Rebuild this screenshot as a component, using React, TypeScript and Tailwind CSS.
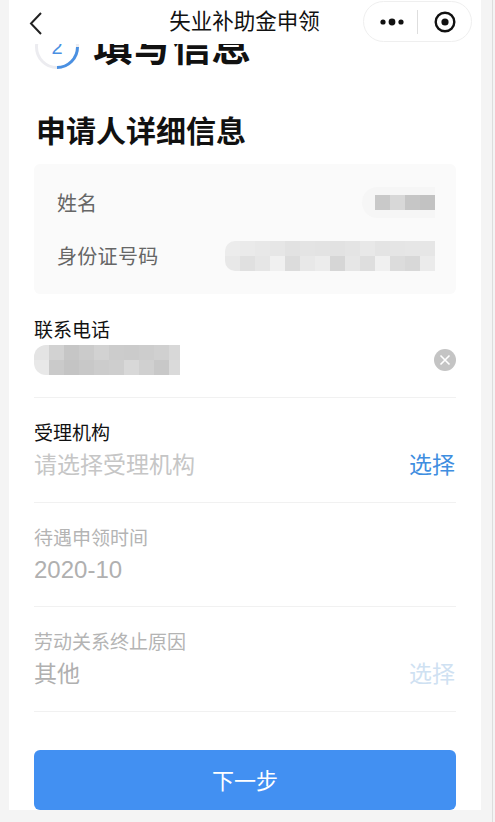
import React from "react";

const cjk = "font-['Liberation_Sans','Noto_Sans_CJK_SC',sans-serif]";

// 打码色块，每格 15px
function Mosaic({ rows, className }: { rows: string[][]; className?: string }) {
  return (
    <div className={`flex flex-col overflow-hidden ${className ?? ""}`}>
      {rows.map((row, i) => (
        <div key={i} className="flex shrink-0">
          {row.map((c, j) => (
            <div key={j} className="w-[15px] h-[15px] shrink-0" style={{ backgroundColor: c }} />
          ))}
        </div>
      ))}
    </div>
  );
}

const nameBlocks = [["#c9c9c9", "#d8d8d8", "#c6c6c6", "#c2c2c2"]];
const idBlocks = [
  ["#ececec", "#eaeaea", "#e8e8e8", "#e6e6e6", "#e2e2e2", "#e4e4e4", "#e3e3e3", "#e2e2e2", "#e4e4e4", "#e8e8e8", "#e4e4e4", "#e5e5e5", "#e6e6e6", "#e6e6e6"],
  ["#e8e8e8", "#e0e0e0", "#e6e6e6", "#f0f0f0", "#dcdcdc", "#e8e8e8", "#ececec", "#d6d6d6", "#e6e6e6", "#dedede", "#f0f0f0", "#dcdcdc", "#d8d8d8", "#ebebeb"],
];
const phoneBlocks = [
  ["#e4e4e4", "#d2d2d2", "#c6c6c6", "#cbcbcb", "#d2d2d2", "#cccccc", "#cbcbcb", "#cdcdcd", "#d0d0d0", "#d8d8d8"],
  ["#e8e8e8", "#cacaca", "#c4c4c4", "#c8c8c8", "#cccccc", "#cecece", "#d8d8d8", "#d0d0d0", "#c8c8c8", "#dadada"],
];

function Field({
  label,
  value,
  dim,
  action,
  actionClass,
}: {
  label: string;
  value: React.ReactNode;
  dim?: boolean;
  action?: string;
  actionClass?: string;
}) {
  return (
    <div className="h-[104.5px] border-b border-[#f1f1f1] pt-[22px]">
      <div className={`text-[19px] leading-[28px] ${dim ? "text-[#b4b4b4]" : "text-[#111]"}`}>{label}</div>
      <div className="flex items-center justify-between h-[34px]">
        <span className={`text-[23px] ${dim ? "text-[#b0b0b0]" : "text-[#c6c6c6]"}`}>{value}</span>
        {action && <span className={`text-[23px] -ml-px mr-px ${actionClass}`}>{action}</span>}
      </div>
    </div>
  );
}

export default function App() {
  return (
    <div className={`relative w-[495px] h-[822px] bg-[#f4f4f4] overflow-hidden ${cjk}`}>
      <div className="absolute left-[492px] top-0 bottom-0 w-px bg-[#dddddd]" />
      <div className="ml-[9px] w-[472px] h-[810px] bg-white flex flex-col">
        {/* 小程序顶栏 */}
        <div className="h-[44px] shrink-0 flex items-center relative">
          <svg width="16" height="24" viewBox="0 0 16 24" className="ml-[19px] mt-[2px]" fill="none" stroke="#222" strokeWidth="2">
            <path d="M13 2 L3 12.5 L13 23" />
          </svg>
          <div className="absolute left-[80px] right-[80px] text-center text-[21.5px] leading-[42px] text-[#111] -ml-[1px]">失业补助金申领</div>
          <div className="absolute left-[354px] top-[1px] w-[109px] h-[41px] rounded-full border border-[#efefef] bg-white flex items-center">
            <svg width="30" height="8" viewBox="0 0 30 8" className="ml-[15px]" fill="#111">
              <circle cx="4" cy="4" r="2.6" />
              <circle cx="13" cy="4" r="3.4" />
              <circle cx="22" cy="4" r="2.6" />
            </svg>
            <div className="w-px h-[24px] bg-[#dedede] ml-[8px]" />
            <svg width="22" height="22" viewBox="0 0 22 22" className="ml-[16px]">
              <circle cx="11" cy="11" r="9.3" fill="none" stroke="#111" strokeWidth="2.4" />
              <circle cx="11" cy="11" r="3.6" fill="#111" />
            </svg>
          </div>
        </div>

        {/* 步骤标题，被顶栏遮住上半部分 */}
        <div className="h-[28px] shrink-0 overflow-hidden">
          <div className="flex items-center -mt-[20px] ml-[25px]">
            <svg width="46" height="46" viewBox="0 0 46 46" fill="none" strokeWidth="3">
              <circle cx="23" cy="23" r="20.5" stroke="#ececf0" />
              <path d="M43.5 23 A20.5 20.5 0 0 1 23 43.5" stroke="#4a90e2" />
              <text x="23" y="30" textAnchor="middle" fontSize="20" fill="#4a90e2" stroke="none">2</text>
            </svg>
            <span className="ml-[13px] text-[39.5px] leading-[46px] font-bold text-[#111]">填写信息</span>
          </div>
        </div>

        <div className="px-[25px] flex flex-col">
          <h1 className="mt-[40px] ml-[2px] text-[30px] leading-[40px] font-bold text-[#111]">申请人详细信息</h1>

          {/* 已带出的信息 */}
          <div className="mt-[12px] h-[130px] rounded-[6px] bg-[#fafafa] pl-[23px] pr-[21px] flex flex-col">
            <div className="flex items-center justify-between h-[78px] pt-[2px]">
              <span className="text-[20px] text-[#666]">姓名</span>
              <div className="-mt-[2px] pl-[13px] py-[8px] rounded-l-full bg-[#f6f6f6]">
                <Mosaic rows={nameBlocks} />
              </div>
            </div>
            <div className="flex items-center justify-between -mt-[25px] h-[78px] pt-[4px]">
              <span className="text-[20px] text-[#666] tracking-[0.3px]">身份证号码</span>
              <Mosaic rows={idBlocks} className="-mt-[3px] rounded-l-[10px]" />
            </div>
          </div>

          <div className="h-[104px] border-b border-[#f1f1f1] pt-[23px]">
            <div className="text-[19px] leading-[28px] text-[#111]">联系电话</div>
            <div className="flex items-center justify-between">
              <Mosaic rows={phoneBlocks} className="w-[146px] rounded-l-[12px]" />
              <div className="w-[22px] h-[22px] rounded-full bg-[#c4c4c4] flex items-center justify-center">
                <svg width="12" height="12" viewBox="0 0 12 12" stroke="#fff" strokeWidth="1.6">
                  <path d="M1.5 1.5 L10.5 10.5 M10.5 1.5 L1.5 10.5" />
                </svg>
              </div>
            </div>
          </div>

          <Field label="受理机构" value="请选择受理机构" action="选择" actionClass="text-[#3f8ee0]" />
          <Field label="待遇申领时间" value={<span className="text-[24px]">2020-10</span>} dim />
          <Field label="劳动关系终止原因" value="其他" dim action="选择" actionClass="text-[#cfe1f2]" />

          <button className="mt-[38px] h-[60px] pt-[3px] rounded-[6px] bg-[#4290f2] text-white text-[22px]">下一步</button>
        </div>
      </div>
    </div>
  );
}
